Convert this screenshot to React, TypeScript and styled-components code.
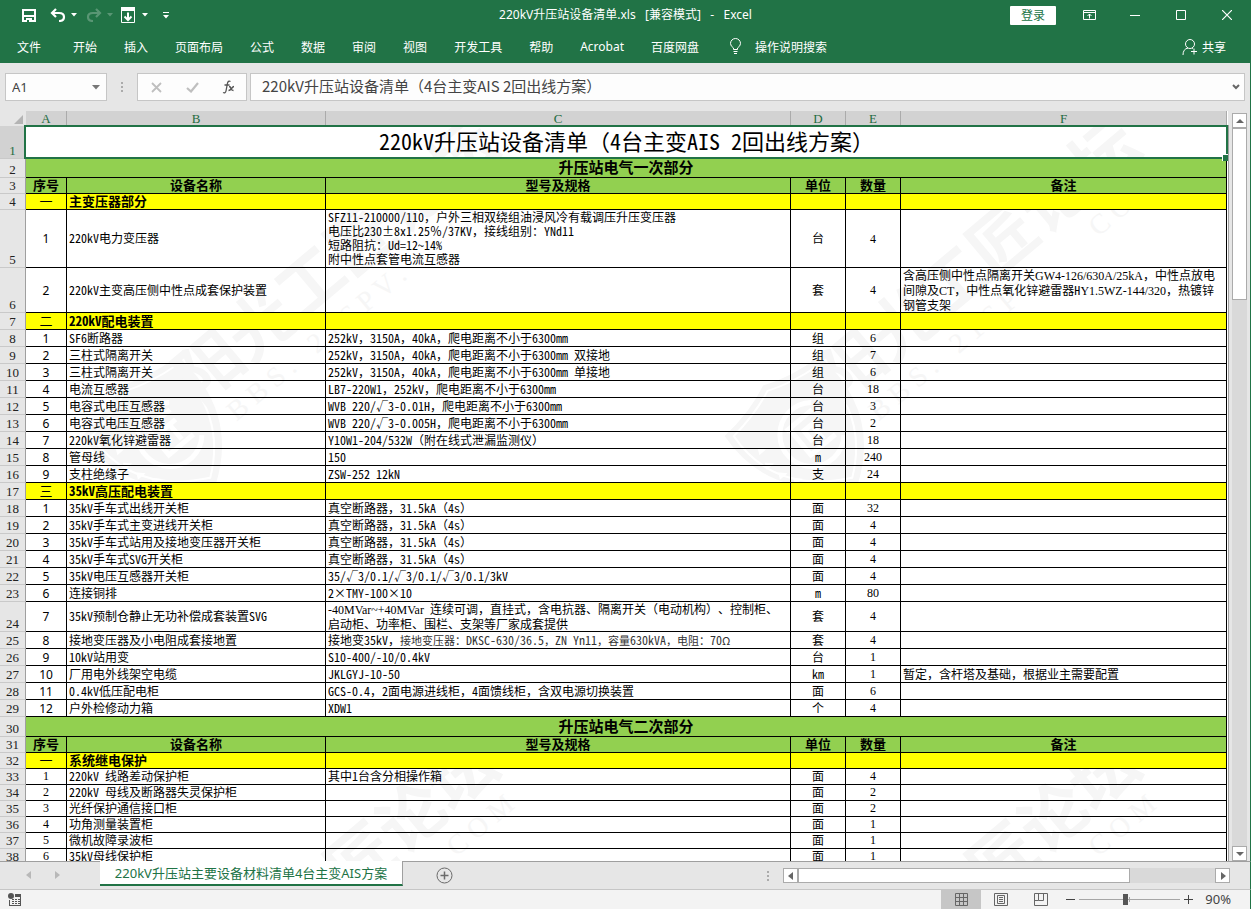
import React from "react";
import styled, { createGlobalStyle, css } from "styled-components";

const song = `"Noto Sans Mono CJK SC", "Noto Sans CJK SC", monospace`;
const ui = `"Noto Sans", "Noto Sans CJK SC", sans-serif`;
const times = `"Liberation Serif", "Noto Sans CJK SC", serif`;

const Global = createGlobalStyle`
  * { box-sizing: border-box; }
  body { margin: 0; background: #e6e6e6; font-family: ${ui}; font-size: 12px; }
  button, input { font: inherit; color: inherit; margin: 0; padding: 0; border: 0; background: none; border-radius: 0; }
  button { display: flex; align-items: center; justify-content: center; cursor: default; }
  svg { display: block; flex: none; }
`;

const Window = styled.div`
  display: flex;
  flex-direction: column;
  height: 100vh;
  overflow: hidden;
`;

/* ---------- title bar ---------- */
const TitleBar = styled.header`
  display: grid;
  grid-template-columns: 1fr auto 1fr;
  align-items: center;
  flex: none;
  height: 30px;
  background: #217346;
  color: #fff;
`;
const QuickTools = styled.div`
  display: flex;
  align-items: center;
  padding-left: 21px;
`;
const Tool = styled.button<{ $gap?: number; $dim?: boolean }>`
  margin-left: ${(p) => p.$gap ?? 0}px;
  opacity: ${(p) => (p.$dim ? 0.25 : 1)};
`;
const Title = styled.h1`
  margin: 0;
  font-size: 12px;
  font-weight: 400;
  line-height: 28px;
  white-space: pre;
`;
const WindowButtons = styled.div`
  display: flex;
  align-items: center;
  justify-content: flex-end;
  padding-right: 1px;
`;
const Login = styled.button`
  width: 46px;
  height: 19px;
  margin-right: 10px;
  border-radius: 1px;
  background: #fff;
  color: #217346;
  line-height: 19px;
`;
const WinButton = styled.button`
  width: 46px;
  height: 28px;
`;

/* ---------- ribbon tabs ---------- */
const Ribbon = styled.nav`
  display: flex;
  align-items: center;
  flex: none;
  gap: 27px;
  height: 33px;
  padding: 0 25px 0 17px;
  background: #217346;
  color: #fff;
`;
const RibbonTab = styled.button<{ $file?: boolean }>`
  height: 32px;
  margin-right: ${(p) => (p.$file ? 5 : 0)}px;
  white-space: nowrap;
`;
const IconTab = styled(RibbonTab)<{ $gap: number; $end?: boolean }>`
  gap: ${(p) => p.$gap}px;
  margin-left: ${(p) => (p.$end ? "auto" : "3px")};
`;

/* ---------- formula bar ---------- */
const FormulaRow = styled.div`
  display: flex;
  flex: none;
  height: 48px;
  padding: 10px 5px;
  border-right: 1px solid #217346;
  color: #444;
`;
const Box = styled.div`
  display: flex;
  align-items: center;
  height: 28px;
  border: 1px solid #c6c6c6;
  background: #fdfdfd;
`;
const NameBox = styled(Box)`
  width: 102px;
  padding: 0 6px;
  font-size: 13px;
  input { flex: 1; min-width: 0; }
`;
const Grip = styled.div`
  display: flex;
  align-items: center;
  justify-content: center;
  width: 30px;
  height: 28px;
`;
const FormulaTools = styled(Box)`
  width: 110px;
  margin-right: 3px;
  button { flex: 1; height: 26px; }
`;
const FormulaBox = styled(Box)`
  flex: 1;
  padding: 0 4px 0 11px;
  input {
    flex: 1;
    min-width: 0;
    height: 26px;
    padding-bottom: 3px;
    font-family: "Noto Sans CJK SC", sans-serif;
    font-size: 15px;
    text-spacing-trim: space-all;
  }
`;

/* ---------- sheet ---------- */
const Body = styled.main`
  display: flex;
  flex: 1;
  min-height: 0;
  border-right: 1px solid #217346;
`;
const SheetView = styled.div`
  position: relative;
  flex: 1;
  min-width: 0;
  padding-right: 1px;
  overflow: hidden;
  background: #fff;
`;
const Watermark = styled.svg`
  position: absolute;
  top: 0;
  left: 0;
  pointer-events: none;
`;
const Grid = styled.table`
  position: relative;
  width: 100%;
  table-layout: fixed;
  border-collapse: separate;
  border-spacing: 0;
  font-family: ${song};
  font-size: 12px;
  color: #000;
  text-spacing-trim: space-all;
  th, td { padding: 0; font-weight: 400; }
`;
const Corner = styled.td`
  height: 15px;
  background: #e6e6e6;
  svg { margin: 2px 3px 0 auto; }
`;
const ColHead = styled.th`
  height: 15px;
  border-right: 1px solid #ababab;
  background: #d2d2d2;
  color: #1e6b40;
  font-family: ${times};
  font-size: 13px;
  line-height: 15px;
`;
const RowHead = styled.th<{ $h: number; $on?: boolean }>`
  border-right: 1px solid #9f9f9f;
  border-bottom: 1px solid #c9c9c9;
  background: ${(p) => (p.$on ? "#d2d2d2" : "#e6e6e6")};
  color: ${(p) => (p.$on ? "#1e6b40" : "#222")};
  font-family: ${times};
  font-size: 13px;
  div {
    display: flex;
    align-items: flex-end;
    justify-content: center;
    height: ${(p) => p.$h - 1}px;
    line-height: 14px;
  }
`;
type Tone = "plain" | "green" | "yellow";
const tones = { plain: "transparent", green: "#92d050", yellow: "#ffff00" };
const Cell = styled.td<{ $tone?: Tone }>`
  border-right: 1px solid #000;
  border-bottom: 1px solid #000;
  background: ${(p) => tones[p.$tone ?? "plain"]};
`;
const Fill = styled.div<{ $h: number; $center?: boolean; $size?: number; $bold?: boolean; $lh?: number; $font?: string; $lift?: number }>`
  display: flex;
  align-items: center;
  justify-content: ${(p) => (p.$center ? "center" : "flex-start")};
  height: ${(p) => p.$h - 1}px;
  padding-left: ${(p) => (p.$center ? 0 : 2)}px;
  padding-bottom: ${(p) => p.$lift ?? 2}px;
  white-space: pre;
  line-height: ${(p) => p.$lh ?? 15}px;
  ${(p) => p.$size && css`font-size: ${p.$size}px;`}
  ${(p) => p.$bold && css`font-weight: 700;`}
  ${(p) => p.$font && css`font-family: ${p.$font};`}
`;
const TitleCell = styled.td`
  position: relative;
  font-size: 22px;
  font-weight: 300;
  &::before {
    content: "";
    position: absolute;
    inset: -1px -1px 0 -2px;
    border: 2px solid #217346;
  }
  &::after {
    content: "";
    position: absolute;
    right: -1px;
    bottom: -2px;
    width: 5px;
    height: 6px;
    border: 1px solid #fff;
    border-width: 1px 0 0 1px;
    background: #217346;
    z-index: 1;
  }
`;
const Times = styled.span`
  font-family: ${times};
  font-size: 12px;
  line-height: 10px;
`;
const Note = styled.span`
  font-size: 11px;
  line-height: 10px;
  color: #333;
`;
const NoteLatin = styled.span`
  font-size: 12px;
`;
const Edge = styled.div`
  flex: none;
  width: 4px;
  margin-top: 14px;
  border-left: 1px solid #9f9f9f;
`;

/* ---------- scroll bars ---------- */
const VScroll = styled.div`
  display: flex;
  flex-direction: column;
  flex: none;
  width: 15px;
  margin: 2px 3px 0 0;
  background: #d9d9d9;
`;
const ScrollButton = styled.button`
  flex: none;
  width: 15px;
  height: 15px;
  border: 1px solid #ababab;
  background: #fff;
`;
const VThumb = styled.div`
  flex: none;
  height: 172px;
  margin-bottom: auto;
  border: 1px solid #ababab;
  background: #fff;
`;
const TabStrip = styled.div`
  display: flex;
  flex: none;
  height: 28px;
  padding-right: 20px;
  border-top: 1px solid #9f9f9f;
  border-right: 1px solid #217346;
  background: #e6e6e6;
`;
const TabArrows = styled.div`
  display: flex;
  align-items: center;
  gap: 20px;
  width: 100px;
  padding: 0 0 2px 25px;
`;
const SheetTab = styled.button`
  width: 303px;
  height: 25px;
  margin-top: -1px;
  border-right: 1px solid #9f9f9f;
  border-bottom: 2px solid #217346;
  background: #fff;
  color: #217346;
  font-size: 13px;
  white-space: nowrap;
`;
const AddSheet = styled.button`
  width: 17px;
  height: 26px;
  margin: 0 auto 0 33px;
`;
const HScroll = styled.div`
  display: flex;
  width: 447px;
  height: 15px;
  margin-top: 6px;
  background: #d9d9d9;
`;
const HThumb = styled.div`
  width: 332px;
  margin-right: auto;
  border: 1px solid #ababab;
  background: #fff;
`;

/* ---------- status bar ---------- */
const StatusBar = styled.footer`
  display: flex;
  align-items: center;
  flex: none;
  height: 20px;
  padding: 0 19px 0 8px;
  border-top: 1px solid #c6c6c6;
  border-right: 1px solid #217346;
  background: #f3f3f3;
  color: #444;
`;
const Views = styled.div`
  display: flex;
  margin: 0 5px 0 auto;
`;
const ViewButton = styled.button<{ $on?: boolean }>`
  width: 40px;
  height: 19px;
  background: ${(p) => (p.$on ? "#c6c6c6" : "transparent")};
`;
const Zoom = styled.input`
  appearance: none;
  width: 101px;
  height: 15px;
  margin: 0 4px;
  background:
    linear-gradient(#a6a6a6, #a6a6a6) center / 1px 5px no-repeat,
    linear-gradient(#a6a6a6, #a6a6a6) center / 100% 1px no-repeat;
  &::-webkit-slider-thumb {
    appearance: none;
    width: 5px;
    height: 11px;
    background: #555;
  }
`;
const Percent = styled.span`
  margin-left: 12px;
  font-size: 13px;
  line-height: 19px;
`;

const Caret = ({ c = "#fff" }: { c?: string }) => (
  <svg width="6" height="4" viewBox="0 0 6 4"><path d="M0 0h6L3 3.5z" fill={c} /></svg>
);
const Dots = () => (
  <svg width="2" height="12" viewBox="0 0 2 12" fill="#ababab">
    <path d="M0 1h2v2H0zM0 5h2v2H0zM0 9h2v2H0z" />
  </svg>
);
const Arrow = ({ d, c = "#666" }: { d: "l" | "r" | "u" | "d"; c?: string }) => {
  const paths = { l: "M6 0v8L1 4z", r: "M2 0v8l5-4z", u: "M0 6h8L4 2z", d: "M0 2h8L4 6z" };
  return <svg width="8" height="8" viewBox="0 0 8 8"><path d={paths[d]} fill={c} /></svg>;
};

const Mark = ({ x, y }: { x: number; y: number }) => (
  <g transform={`translate(${x} ${y}) rotate(-40)`} fill="#f6f6f6">
    <path d="M0 4Q36 2 62-10Q88 2 124 4Q136 84 72 126Q-8 84 0 4z" />
    <path d="M7 10Q38 7 62-3Q86 7 117 10Q124 80 71 118Q0 80 7 10z" fill="none" stroke="#fff" strokeWidth="2" />
    <path d="M88 34A32 32 0 1 0 92 80M50 40h34M54 40v34h32M62 51h20M64 51v14M74 51v19" fill="none" stroke="#fff" strokeWidth="5" />
    <path d="M18 36l3 4-5 0zM14 52l4 4-6 0zM18 68l4 4-6 0zM26 82l4 4-6 0z" fill="#fff" stroke="#fff" strokeWidth="2" />
    <text x="109" y="56" fontSize="66" fontWeight="700" fontFamily="Noto Sans CJK SC">阳光工匠论坛</text>
    <g fontSize="28" fontFamily="Liberation Serif">
      <text x="127" y="92">B B S .</text>
      <text x="232" y="92">2 1 S P V .</text>
      <text x="414" y="92">C O M</text>
    </g>
  </g>
);

type Row = {
  h: number;
  kind?: "title" | "band" | "head" | "section";
  cells?: React.ReactNode[];
  lh?: number;
  serifNo?: boolean;
};

const heads = ["序号", "设备名称", "型号及规格", "单位", "数量", "备注"];
const item = (h: number, ...cells: React.ReactNode[]): Row => ({ h, cells });
const section = (h: number, no: string, name: string): Row => ({ h, kind: "section", cells: [no, name, "", "", "", ""] });

const rows: Row[] = [
  { h: 33, kind: "title", cells: ["220kV升压站设备清单（4台主变AIS 2回出线方案）"] },
  { h: 19, kind: "band", cells: ["升压站电气一次部分"] },
  { h: 16, kind: "head", cells: heads },
  section(16, "一", "主变压器部分"),
  {
    h: 58,
    lh: 14,
    cells: ["1", "220kV电力变压器", "SFZ11-210000/110，户外三相双绕组油浸风冷有载调压升压变压器\n电压比230±8x1.25％/37KV，接线组别：YNd11\n短路阻抗：Ud=12~14%\n附中性点套管电流互感器", "台", "4", ""],
  },
  item(45, "2", "220kV主变高压侧中性点成套保护装置", "", "套", "4",
    <span>
      含高压侧中性点隔离开关<Times>GW4-126/630A/25kA</Times>，中性点放电{"\n"}
      间隙及<Times>CT</Times>，中性点氧化锌避雷器H<Times>Y1.5WZ-144/320</Times>，热镀锌{"\n"}
      钢管支架
    </span>),
  section(17, "二", "220kV配电装置"),
  item(17, "1", "SF6断路器", "252kV，3150A，40kA，爬电距离不小于6300mm", "组", "6", ""),
  item(17, "2", "三柱式隔离开关", "252kV，3150A，40kA，爬电距离不小于6300mm 双接地", "组", "7", ""),
  item(17, "3", "三柱式隔离开关", "252kV，3150A，40kA，爬电距离不小于6300mm 单接地", "组", "6", ""),
  item(17, "4", "电流互感器", "LB7-220W1，252kV，爬电距离不小于6300mm", "台", "18", ""),
  item(17, "5", "电容式电压互感器", "WVB 220/√3-0.01H，爬电距离不小于6300mm", "台", "3", ""),
  item(17, "6", "电容式电压互感器", "WVB 220/√3-0.005H，爬电距离不小于6300mm", "台", "2", ""),
  item(17, "7", "220kV氧化锌避雷器", "Y10W1-204/532W（附在线式泄漏监测仪）", "台", "18", ""),
  item(17, "8", "管母线", "150", "m", "240", ""),
  item(17, "9", "支柱绝缘子", "ZSW-252 12kN", "支", "24", ""),
  section(17, "三", "35kV高压配电装置"),
  item(17, "1", "35kV手车式出线开关柜", "真空断路器，31.5kA（4s）", "面", "32", ""),
  item(17, "2", "35kV手车式主变进线开关柜", "真空断路器，31.5kA（4s）", "面", "4", ""),
  item(17, "3", "35kV手车式站用及接地变压器开关柜", "真空断路器，31.5kA（4s）", "面", "4", ""),
  item(17, "4", "35kV手车式SVG开关柜", "真空断路器，31.5kA（4s）", "面", "4", ""),
  item(17, "5", "35kV电压互感器开关柜", "35/√3/0.1/√3/0.1/√3/0.1/3kV", "面", "4", ""),
  item(17, "6", "连接铜排", "2×TMY-100×10", "m", "80", ""),
  item(30, "7", "35kV预制仓静止无功补偿成套装置SVG",
    <span>
      <Times>-40MVar~+40MVar</Times> 连续可调，直挂式，含电抗器、隔离开关（电动机构）、控制柜、{"\n"}
      启动柜、功率柜、围栏、支架等厂家成套提供
    </span>, "套", "4", ""),
  item(17, "8", "接地变压器及小电阻成套接地置",
    <span>
      接地变35kV，<Note>接地变压器：<NoteLatin>DKSC-630/36.5</NoteLatin>，<NoteLatin>ZN Yn11</NoteLatin>，容量<NoteLatin>630kVA</NoteLatin>，电阻：<NoteLatin>70</NoteLatin>Ω</Note>
    </span>, "套", "4", ""),
  item(17, "9", "10kV站用变", "S10-400/-10/0.4kV", "台", "1", ""),
  item(17, "10", "厂用电外线架空电缆", "JKLGYJ-10-50", "km", "1", "暂定，含杆塔及基础，根据业主需要配置"),
  item(17, "11", "0.4kV低压配电柜", "GCS-0.4，2面电源进线柜，4面馈线柜，含双电源切换装置", "面", "6", ""),
  item(17, "12", "户外检修动力箱", "XDW1", "个", "4", ""),
  { h: 20, kind: "band", cells: ["升压站电气二次部分"] },
  { h: 16, kind: "head", cells: heads },
  section(16, "一", "系统继电保护"),
  { h: 16, serifNo: true, cells: ["1", "220kV 线路差动保护柜", "其中1台含分相操作箱", "面", "4", ""] },
  { h: 16, serifNo: true, cells: ["2", "220kV 母线及断路器失灵保护柜", "", "面", "2", ""] },
  { h: 16, serifNo: true, cells: ["3", "光纤保护通信接口柜", "", "面", "2", ""] },
  { h: 16, serifNo: true, cells: ["4", "功角测量装置柜", "", "面", "1", ""] },
  { h: 16, serifNo: true, cells: ["5", "微机故障录波柜", "", "面", "1", ""] },
  { h: 16, serifNo: true, cells: ["6", "35kV母线保护柜", "", "面", "1", ""] },
];

const SheetRow = ({ row, n }: { row: Row; n: number }) => {
  const { h, kind, cells = [], lh, serifNo } = row;
  return (
    <tr>
      <RowHead scope="row" $h={h} $on={n === 1}><div>{n}</div></RowHead>
      {kind === "title" && (
        <TitleCell colSpan={6}><Fill $h={h + 1} $center $lh={28} $lift={5}>{cells[0]}</Fill></TitleCell>
      )}
      {kind === "band" && (
        <Cell colSpan={6} $tone="green"><Fill $h={h} $center $bold $size={15} $lh={16}>{cells[0]}</Fill></Cell>
      )}
      {kind === "head" && cells.map((c, i) => (
        <Cell key={i} $tone="green"><Fill $h={h} $center $bold $size={13}>{c}</Fill></Cell>
      ))}
      {kind === "section" && cells.map((c, i) => (
        <Cell key={i} $tone="yellow"><Fill $h={h} $center={i !== 1} $bold={i === 1} $size={13}>{c}</Fill></Cell>
      ))}
      {!kind && cells.map((c, i) => {
        const font = i === 4 || (i === 0 && serifNo) ? times : i === 0 ? ui : undefined;
        return (
          <Cell key={i}>
            <Fill $h={h} $center={i === 0 || i === 3 || i === 4} $lh={lh} $font={font} $lift={font ? 0 : 2}>{c}</Fill>
          </Cell>
        );
      })}
    </tr>
  );
};

const tabs = ["开始", "插入", "页面布局", "公式", "数据", "审阅", "视图", "开发工具", "帮助", "Acrobat", "百度网盘"];

export default function App() {
  return (
    <>
      <Global />
      <Window>
        <TitleBar>
          <QuickTools>
            <Tool aria-label="保存">
              <svg width="15" height="15" viewBox="0 0 15 15" fill="#fff">
                <path d="M1 1h14v13H1zM3 3v4h10V3zM3 9v3h2v-2h6v2h2V9z" fillRule="evenodd" /><path d="M6 12h2v2H6z" fill="#217346" />
              </svg>
            </Tool>
            <Tool aria-label="撤消" $gap={14}>
              <svg width="16" height="14" viewBox="0 0 16 14" fill="none" stroke="#fff" strokeWidth="2.200">
                <path d="M6 1L2 5l4 4M2 5h7q5 0 5 4t-5 4" />
              </svg>
            </Tool>
            <Tool aria-label="撤消选项" $gap={5}><Caret /></Tool>
            <Tool aria-label="恢复" $gap={9} $dim>
              <svg width="16" height="14" viewBox="0 0 16 14" fill="none" stroke="#fff" strokeWidth="2.200">
                <path d="M10 1l4 4-4 4M14 5H7Q2 5 2 9t5 4" />
              </svg>
            </Tool>
            <Tool aria-label="恢复选项" $gap={5} $dim><Caret /></Tool>
            <Tool aria-label="导出" $gap={8}>
              <svg width="14" height="16" viewBox="0 0 14 16" fill="none" stroke="#fff">
                <path d="M.5.5h13v15H.5z" /><path d="M0 0h14v4H0z" fill="#fff" stroke="none" />
                <path d="M7 5.5v8M3.5 9.5L7 13l3.500-3.500" strokeWidth="2" />
              </svg>
            </Tool>
            <Tool aria-label="导出选项" $gap={7}><Caret /></Tool>
            <Tool aria-label="自定义快速访问工具栏" $gap={15}>
              <svg width="7" height="7" viewBox="0 0 7 7" fill="#fff"><path d="M0 0h6v1H0zM0 3h6L3 6.500z" /></svg>
            </Tool>
          </QuickTools>
          <Title>220kV升压站设备清单.xls   [兼容模式]   -   Excel</Title>
          <WindowButtons>
            <Login>登录</Login>
            <WinButton aria-label="功能区显示选项">
              <svg width="13" height="10" viewBox="0 0 13 10" fill="none" stroke="#fff">
                <path d="M.5.5h12v9H.5zM.5 2.500h12M6.500 8.500V4M4.500 6l2-2 2 2" />
              </svg>
            </WinButton>
            <WinButton aria-label="最小化">
              <svg width="10" height="1" viewBox="0 0 10 1"><path d="M0 0h10v1H0z" fill="#fff" /></svg>
            </WinButton>
            <WinButton aria-label="最大化">
              <svg width="10" height="10" viewBox="0 0 10 10"><path d="M.5.5h9v9h-9z" fill="none" stroke="#fff" /></svg>
            </WinButton>
            <WinButton aria-label="关闭">
              <svg width="10" height="10" viewBox="0 0 10 10"><path d="M0 0l10 10M10 0L0 10" stroke="#fff" strokeWidth="1.200" /></svg>
            </WinButton>
          </WindowButtons>
        </TitleBar>

        <Ribbon>
          <RibbonTab $file>文件</RibbonTab>
          {tabs.map((t) => <RibbonTab key={t}>{t}</RibbonTab>)}
          <IconTab $gap={13}>
            <svg width="13" height="17" viewBox="0 0 13 17" fill="none" stroke="#fff">
              <path d="M4.500 11.500V10Q1.500 8 1.500 5.500a5 5 0 0 1 10 0Q11.500 8 8.500 10v1.500zM4.500 13.500h4M5 15.500h3" />
            </svg>
            操作说明搜索
          </IconTab>
          <IconTab $gap={4} $end>
            <svg width="16" height="16" viewBox="0 0 16 16" fill="none" stroke="#fff">
              <circle cx="8" cy="5" r="4.500" /><path d="M1 16q0-6 5-7M10 9l1 .5M12 9.500v6M9 12.500h6" />
            </svg>
            共享
          </IconTab>
        </Ribbon>

        <FormulaRow>
          <NameBox>
            <input aria-label="名称框" defaultValue="A1" />
            <button aria-label="名称框列表"><svg width="8" height="5" viewBox="0 0 8 5"><path d="M0 0h8L4 4.500z" fill="#777" /></svg></button>
          </NameBox>
          <Grip><Dots /></Grip>
          <FormulaTools>
            <button aria-label="取消">
              <svg width="11" height="11" viewBox="0 0 11 11"><path d="M1 1l9 9M10 1l-9 9" stroke="#bfbfbf" strokeWidth="1.800" /></svg>
            </button>
            <button aria-label="输入">
              <svg width="13" height="11" viewBox="0 0 13 11"><path d="M1 6l4 3.500L12 1" fill="none" stroke="#bfbfbf" strokeWidth="2.200" /></svg>
            </button>
            <button aria-label="插入函数">
              <svg width="13" height="14" viewBox="0 0 13 14" fill="none" stroke="#555" strokeWidth="1.300">
                <path d="M8.500 1.500Q6 0 5.300 4L4 11Q3.500 13.500 1 12.500M2.500 5h5" />
                <path d="M7 6.500q1.500 0 2 2t2.500 2M12 6.500q-1 0-2.500 2t-3 2" />
              </svg>
            </button>
          </FormulaTools>
          <FormulaBox>
            <input aria-label="编辑栏" defaultValue="220kV升压站设备清单（4台主变AIS 2回出线方案）" />
            <button aria-label="展开编辑栏">
              <svg width="8" height="6" viewBox="0 0 8 6"><path d="M1 1l3 3 3-3" fill="none" stroke="#666" strokeWidth="2" /></svg>
            </button>
          </FormulaBox>
        </FormulaRow>

        <Body>
          <SheetView>
            <Watermark width="1227" height="750" viewBox="0 111 1227 750">
              <Mark x={80} y={433} /><Mark x={722} y={433} />
              <Mark x={80} y={1053} /><Mark x={722} y={1053} />
            </Watermark>
            <Grid>
              <colgroup>
                <col width="26" /><col width="41" /><col width="259" /><col width="465" />
                <col width="55" /><col width="55" /><col />
              </colgroup>
              <thead>
                <tr>
                  <Corner><svg width="9" height="9" viewBox="0 0 9 9"><path d="M9 0v9H0z" fill="#b4b4b4" /></svg></Corner>
                  {["A", "B", "C", "D", "E", "F"].map((c) => <ColHead key={c} scope="col">{c}</ColHead>)}
                </tr>
              </thead>
              <tbody>{rows.map((row, i) => <SheetRow key={i} row={row} n={i + 1} />)}</tbody>
            </Grid>
          </SheetView>
          <Edge />
          <VScroll>
            <ScrollButton aria-label="向上滚动"><Arrow d="u" /></ScrollButton>
            <VThumb />
            <ScrollButton aria-label="向下滚动"><Arrow d="d" /></ScrollButton>
          </VScroll>
        </Body>

        <TabStrip>
          <TabArrows>
            <button aria-label="上一个工作表"><Arrow d="l" c="#b8b8b8" /></button>
            <button aria-label="下一个工作表"><Arrow d="r" c="#b8b8b8" /></button>
          </TabArrows>
          <SheetTab>220kV升压站主要设备材料清单4台主变AIS方案</SheetTab>
          <AddSheet aria-label="新工作表">
            <svg width="17" height="17" viewBox="0 0 17 17" fill="none" stroke="#6a6a6a">
              <circle cx="8.500" cy="8.500" r="7.500" /><path d="M8.500 4.500v8M4.500 8.500h8" strokeWidth="1.500" />
            </svg>
          </AddSheet>
          <Grip><Dots /></Grip>
          <HScroll>
            <ScrollButton aria-label="向左滚动"><Arrow d="l" /></ScrollButton>
            <HThumb />
            <ScrollButton aria-label="向右滚动"><Arrow d="r" /></ScrollButton>
          </HScroll>
        </TabStrip>

        <StatusBar>
          <button aria-label="录制宏">
            <svg width="14" height="14" viewBox="0 0 14 14" fill="#555">
              <circle cx="3" cy="3" r="3" /><path d="M7 1h6v3H7zM1 7h1v5h10V4h1v9H1z" />
              <path d="M4 6h2v1H4zM7 6h2v1H7zM10 6h2v1h-2zM4 8h2v1H4zM7 8h2v1H7zM10 8h2v1h-2zM4 10h2v1H4zM7 10h2v1H7zM10 10h2v1h-2z" />
            </svg>
          </button>
          <Views>
            <ViewButton aria-label="普通" $on>
              <svg width="13" height="13" viewBox="0 0 13 13" fill="none" stroke="#666"><path d="M.5.5h12v12H.5zM4.500 0v13M8.500 0v13M0 4.500h13M0 8.500h13" /></svg>
            </ViewButton>
            <ViewButton aria-label="页面布局视图">
              <svg width="14" height="13" viewBox="0 0 14 13" fill="none" stroke="#666"><path d="M.5.5h13v12H.5zM3.500 2.500h7v8h-7zM5 4.500h4M5 6.500h4M5 8.500h4" /></svg>
            </ViewButton>
            <ViewButton aria-label="分页预览">
              <svg width="14" height="13" viewBox="0 0 14 13" fill="none" stroke="#666"><path d="M.5.5h13v12H.5zM4.500 0v7.500h5V0M.5 7.500h4" /></svg>
            </ViewButton>
          </Views>
          <button aria-label="缩小"><svg width="9" height="9" viewBox="0 0 9 9"><path d="M0 4h9v1H0z" fill="#444" /></svg></button>
          <Zoom type="range" aria-label="显示比例" min={0} max={100} defaultValue={45} />
          <button aria-label="放大"><svg width="9" height="9" viewBox="0 0 9 9"><path d="M0 4h4V0h1v4h4v1H5v4H4V5H0z" fill="#444" /></svg></button>
          <Percent>90%</Percent>
        </StatusBar>
      </Window>
    </>
  );
}
